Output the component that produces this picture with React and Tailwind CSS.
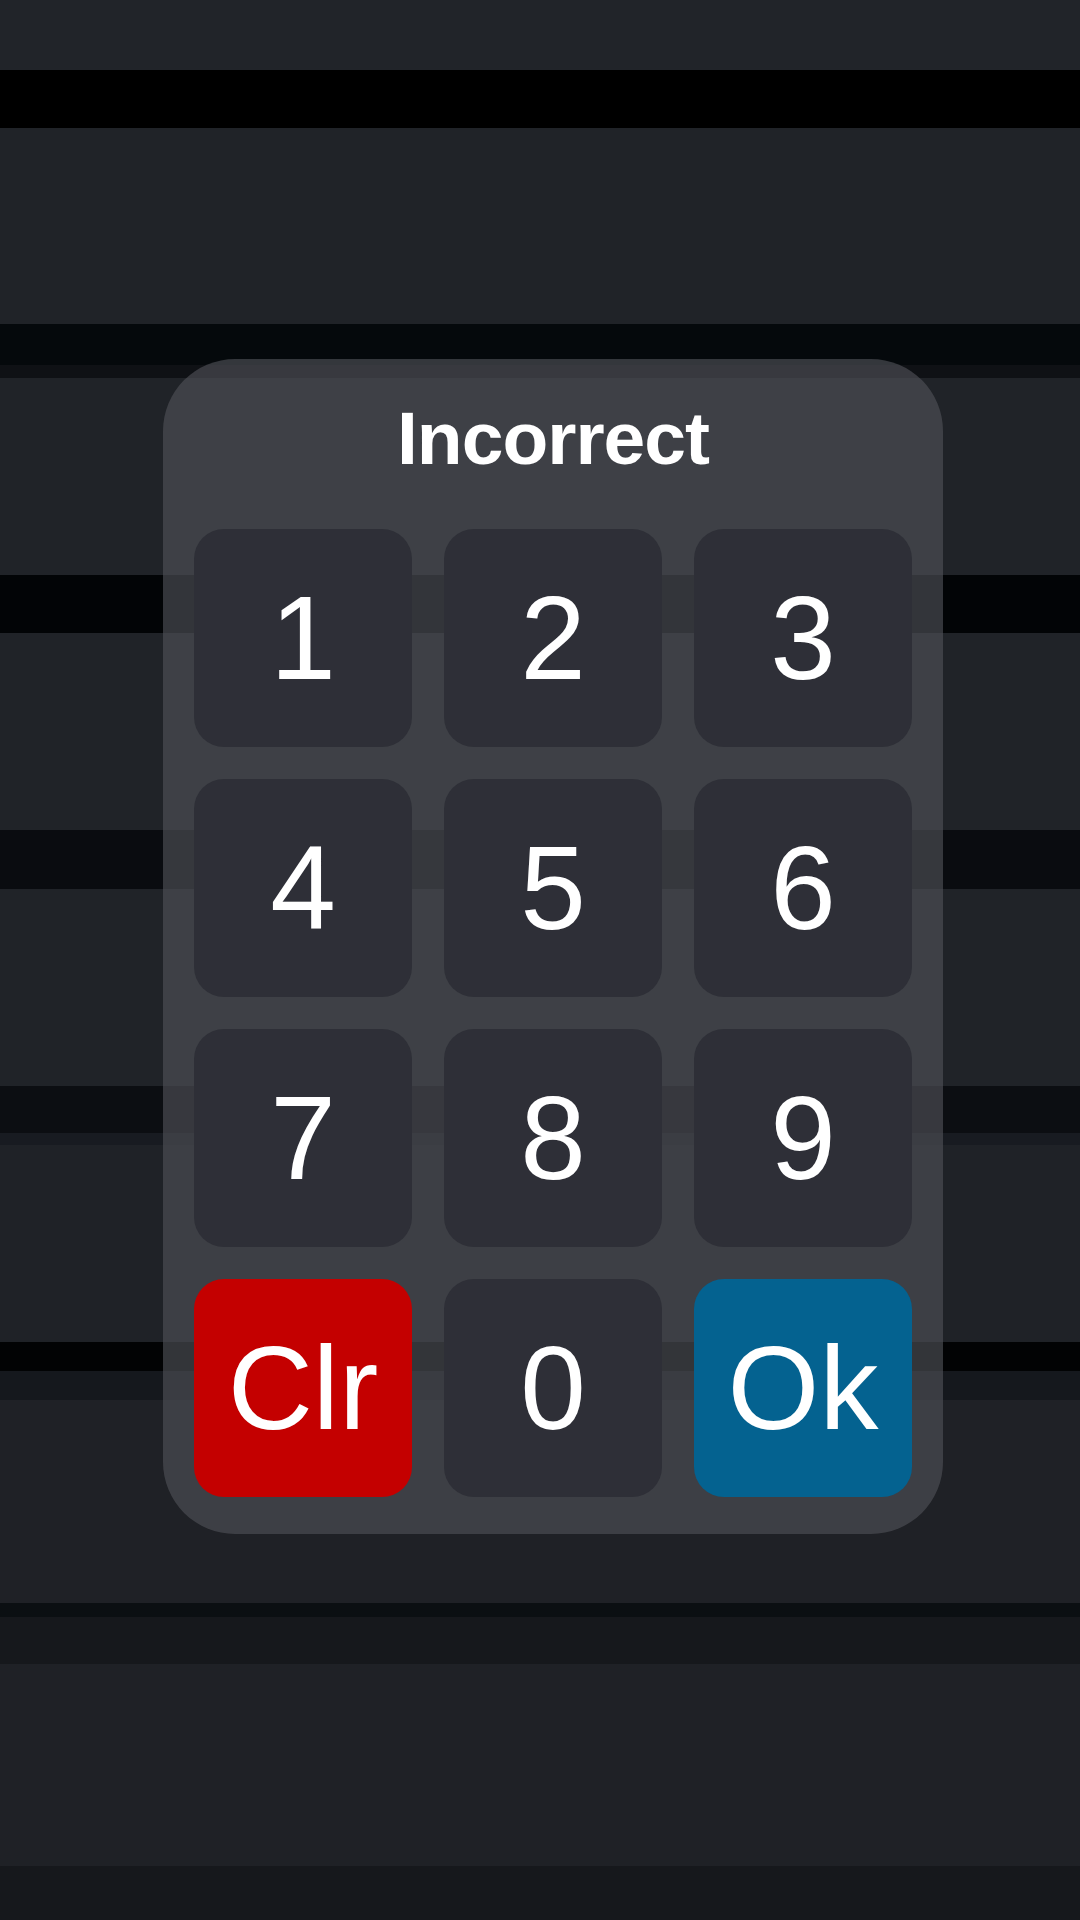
const stripes = [
  'h-[70px] bg-[#212429]',
  'h-[58px] bg-[#000000]',
  'h-[196px] bg-[#202328]',
  'h-[41px] bg-[#05090c]',
  'h-[13px] bg-[#0f1115]',
  'h-[197px] bg-[#202328]',
  'h-[58px] bg-[#020406]',
  'h-[197px] bg-[#202328]',
  'h-[59px] bg-[#0a0c10]',
  'h-[197px] bg-[#202328]',
  'h-[47px] bg-[#0c0e12]',
  'h-[12px] bg-[#181b21]',
  'h-[197px] bg-[#1f2227]',
  'h-[29px] bg-[#020304]',
  'h-[29px] bg-[#15181d]',
  'h-[203px] bg-[#1f2126]',
  'h-[14px] bg-[#0b0f12]',
  'h-[47px] bg-[#16181c]',
  'h-[202px] bg-[#1f2126]',
  'h-[54px] bg-[#16181c]',
]

const keys = [
  { label: '1' }, { label: '2' }, { label: '3' },
  { label: '4' }, { label: '5' }, { label: '6' },
  { label: '7' }, { label: '8' }, { label: '9' },
  { label: 'Clr', tone: 'bg-[#c40000]' },
  { label: '0' },
  { label: 'Ok', tone: 'bg-[#046290]' },
]

const Key = ({ label, tone }) => (
  <button
    className={`h-[218px] w-[218px] rounded-[30px] flex items-center justify-center text-white text-[118px] leading-none ${tone || 'bg-[#2e2f37]'}`}
  >
    {label}
  </button>
)

const App = () => {
  return (
    <div
      className="relative w-[1080px] h-[1920px] overflow-hidden bg-[#202328]"
      style={{ fontFamily: '"Liberation Sans", Arial, sans-serif' }}
    >
      <div className="flex flex-col">
        {stripes.map((s, i) => (
          <div key={i} className={s} />
        ))}
      </div>

      {/* keypad overlay */}
      <div className="absolute left-[163px] top-[359px] w-[780px] h-[1175px] rounded-[72px] bg-[rgba(78,80,86,0.65)] px-[31px] pt-[42px] pb-[34px] flex flex-col items-center">
        <h1 className="text-white font-bold text-[75px] leading-none tracking-[-1px]">Incorrect</h1>
        <div className="mt-[53px] grid grid-cols-[218px_218px_218px] gap-[32px]">
          {keys.map((k) => (
            <Key key={k.label} {...k} />
          ))}
        </div>
      </div>
    </div>
  )
}

export default App
